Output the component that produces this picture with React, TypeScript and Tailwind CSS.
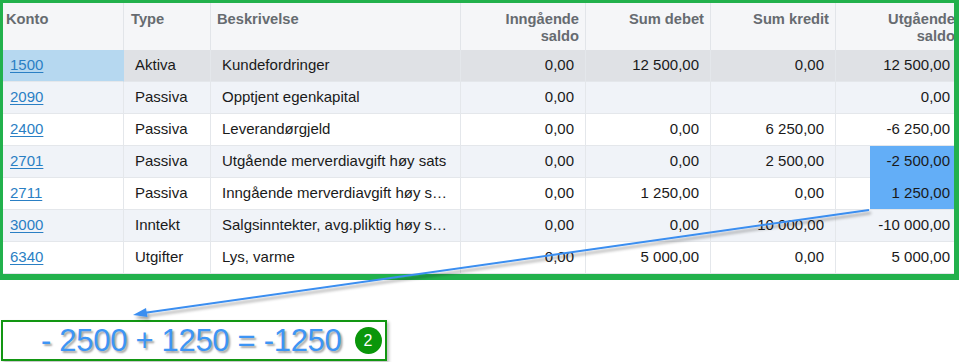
import React from "react";

type Row = {
  konto: string;
  type: string;
  desc: string;
  inn: string;
  debet: string;
  kredit: string;
  ut: string;
};

const rows: Row[] = [
  { konto: "1500", type: "Aktiva", desc: "Kundefordringer", inn: "0,00", debet: "12 500,00", kredit: "0,00", ut: "12 500,00" },
  { konto: "2090", type: "Passiva", desc: "Opptjent egenkapital", inn: "0,00", debet: "", kredit: "", ut: "0,00" },
  { konto: "2400", type: "Passiva", desc: "Leverandørgjeld", inn: "0,00", debet: "0,00", kredit: "6 250,00", ut: "-6 250,00" },
  { konto: "2701", type: "Passiva", desc: "Utgående merverdiavgift høy sats", inn: "0,00", debet: "0,00", kredit: "2 500,00", ut: "-2 500,00" },
  { konto: "2711", type: "Passiva", desc: "Inngående merverdiavgift høy s…", inn: "0,00", debet: "1 250,00", kredit: "0,00", ut: "1 250,00" },
  { konto: "3000", type: "Inntekt", desc: "Salgsinntekter, avg.pliktig høy s…", inn: "0,00", debet: "0,00", kredit: "10 000,00", ut: "-10 000,00" },
  { konto: "6340", type: "Utgifter", desc: "Lys, varme", inn: "0,00", debet: "5 000,00", kredit: "0,00", ut: "5 000,00" },
];

const cols = "grid grid-cols-[121px_87px_250px_125px_125px_125px_125px]";

export default function App() {
  return (
    <div
      className="relative w-[959px] h-[362px] bg-white overflow-hidden"
      style={{ fontFamily: '"Liberation Sans", Arial, sans-serif' }}
    >
      {/* Table frame */}
      <div className="w-[959px] h-[280px] border-t-[3px] border-l-[3px] border-r-[5px] border-b-[6px] border-[#22b14c] overflow-hidden">
        <div className="w-[958px]">
          {/* Header */}
          <div className={`${cols} h-[47px] bg-[#f5f6f8] text-[14.7px] font-bold text-[#666b70] leading-[17px]`}>
            <div className="border-r border-[#e2e5e9] pl-[3px] pt-[8px]">Konto</div>
            <div className="border-r border-[#e2e5e9] pl-[7px] pt-[8px]">Type</div>
            <div className="border-r border-[#e2e5e9] pl-[6px] pt-[8px]">Beskrivelse</div>
            <div className="border-r border-[#e2e5e9] pr-[6px] pt-[8px] text-right">
              Inngående
              <br />
              saldo
            </div>
            <div className="border-r border-[#e2e5e9] pr-[6px] pt-[8px] text-right">Sum debet</div>
            <div className="border-r border-[#e2e5e9] pr-[6px] pt-[8px] text-right">Sum kredit</div>
            <div className="pr-[6px] pt-[8px] text-right">
              Utgående
              <br />
              saldo
            </div>
          </div>
          {/* Body */}
          {rows.map((r, i) => {
            const selected = i === 0;
            const alt = i % 2 === 1;
            const bg = selected ? "bg-[#dfe1e5]" : alt ? "bg-[#f0f3f8]" : "bg-white";
            const hl = i === 3 || i === 4;
            return (
              <div key={r.konto} className={`${cols} h-[32px] ${bg} text-[15px] text-[#1a1a1a]`}>
                <div
                  className={`flex items-center pl-[7px] border-b border-r border-[#e4e7eb] ${
                    selected ? "bg-[#b6d8f0] border-r-[#b6d8f0]" : ""
                  }`}
                >
                  <a className="text-[#2a7fc4] underline underline-offset-[2px] decoration-[1px]">{r.konto}</a>
                </div>
                <div className="flex items-center pl-[11px] border-b border-r border-[#e4e7eb]">{r.type}</div>
                <div className="flex items-center pl-[11px] border-b border-r border-[#e4e7eb] whitespace-nowrap overflow-hidden">
                  {r.desc}
                </div>
                <div className="flex items-center justify-end pr-[11px] border-b border-r border-[#e4e7eb]">{r.inn}</div>
                <div className="flex items-center justify-end pr-[11px] border-b border-r border-[#e4e7eb]">{r.debet}</div>
                <div className="flex items-center justify-end pr-[11px] border-b border-r border-[#e4e7eb]">{r.kredit}</div>
                <div className="relative flex items-center justify-end pr-[11px] border-b border-[#e4e7eb]">
                  {hl && (
                    <div
                      className={`absolute left-[34px] right-0 top-0 bg-[#63aef7] ${i === 3 ? "-bottom-px" : "bottom-0"}`}
                    />
                  )}
                  <span className="relative">{r.ut}</span>
                </div>
              </div>
            );
          })}
        </div>
      </div>

      {/* Formula box */}
      <div className="ml-px mt-[40px] w-[386px] h-[41px] border-2 border-[#129612] flex items-center pl-[38px] shadow-[2px_2px_3px_rgba(0,0,0,0.25)]">
        <span
          className="text-[31px] leading-none text-[#3d95f5] tracking-[-0.3px]"
          style={{ textShadow: "2px 2px 2px rgba(0,0,0,0.35)" }}
        >
          - 2500 + 1250 = -1250
        </span>
        <span className="ml-[13px] w-[27px] h-[27px] rounded-full bg-[#0a960a] text-white text-[16px] flex items-center justify-center">
          2
        </span>
      </div>

      {/* Arrow overlay */}
      <svg className="absolute left-0 top-0 pointer-events-none" width="959" height="362" viewBox="0 0 959 362">
        <defs>
          <filter id="sh" x="-10%" y="-50%" width="120%" height="200%">
            <feDropShadow dx="2" dy="3" stdDeviation="1.5" floodColor="#000" floodOpacity="0.35" />
          </filter>
        </defs>
        <g filter="url(#sh)">
          <line x1="869" y1="210" x2="140" y2="313.5" stroke="#3b8ef0" strokeWidth="2" />
          <polygon points="133,315 146,308 147.5,317" fill="#3b8ef0" />
        </g>
      </svg>
    </div>
  );
}
